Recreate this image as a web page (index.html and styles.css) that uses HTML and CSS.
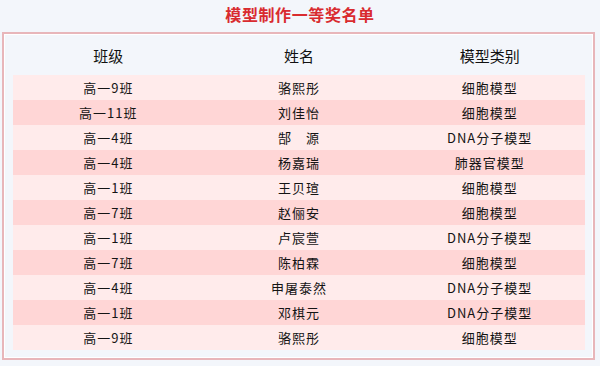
FILE: index.html
```html
<!DOCTYPE html>
<html lang="zh">
<head>
<meta charset="utf-8">
<link rel="stylesheet" href="styles.css">
</head>
<body>
<h1 class="title">模型制作一等奖名单</h1>
<div class="panel">
  <div class="row head"><span>班级</span><span>姓名</span><span>模型类别</span></div>
  <div class="row odd"><span>高一9班</span><span>骆熙彤</span><span>细胞模型</span></div>
  <div class="row even"><span>高一11班</span><span>刘佳怡</span><span>细胞模型</span></div>
  <div class="row odd"><span>高一4班</span><span>郜　源</span><span>DNA分子模型</span></div>
  <div class="row even"><span>高一4班</span><span>杨嘉瑞</span><span>肺器官模型</span></div>
  <div class="row odd"><span>高一1班</span><span>王贝瑄</span><span>细胞模型</span></div>
  <div class="row even"><span>高一7班</span><span>赵俪安</span><span>细胞模型</span></div>
  <div class="row odd"><span>高一1班</span><span>卢宸萱</span><span>DNA分子模型</span></div>
  <div class="row even"><span>高一7班</span><span>陈柏霖</span><span>细胞模型</span></div>
  <div class="row odd"><span>高一4班</span><span>申屠泰然</span><span>DNA分子模型</span></div>
  <div class="row even"><span>高一1班</span><span>邓棋元</span><span>DNA分子模型</span></div>
  <div class="row odd"><span>高一9班</span><span>骆熙彤</span><span>细胞模型</span></div>
</div>
</body>
</html>
```
FILE: styles.css
```css
html, body {
  margin: 0;
  padding: 0;
  background: #f3f6fb;
  font-family: "Noto Sans CJK SC", "Noto Sans", sans-serif;
  color: #141414;
}
.title {
  margin: 0;
  height: 32px;
  padding-top: 3px;
  box-sizing: border-box;
  text-align: center;
  font-size: 16px;
  line-height: 22px;
  font-weight: 700;
  color: #d92b2f;
  letter-spacing: 0.6px;
}
.panel {
  margin: 0 5px 0 2px;
  border: 2px solid #e8b6ba;
  box-shadow: inset 0 0 0 1px #ffffff;
  padding: 0 8px 8px 9px;
  background: #f3f6fb;
}
.row {
  display: grid;
  grid-template-columns: 1fr 1fr 1fr;
  height: 25px;
  align-items: center;
  text-align: center;
  font-size: 13px;
  letter-spacing: 1px;
}
.row.head {
  height: 41px;
  font-size: 15px;
  letter-spacing: 0;
  color: #111;
  padding-top: 1px;
  box-sizing: border-box;
}
.row.odd { background: #ffebeb; }
.row.even { background: #ffd6d6; }
```
